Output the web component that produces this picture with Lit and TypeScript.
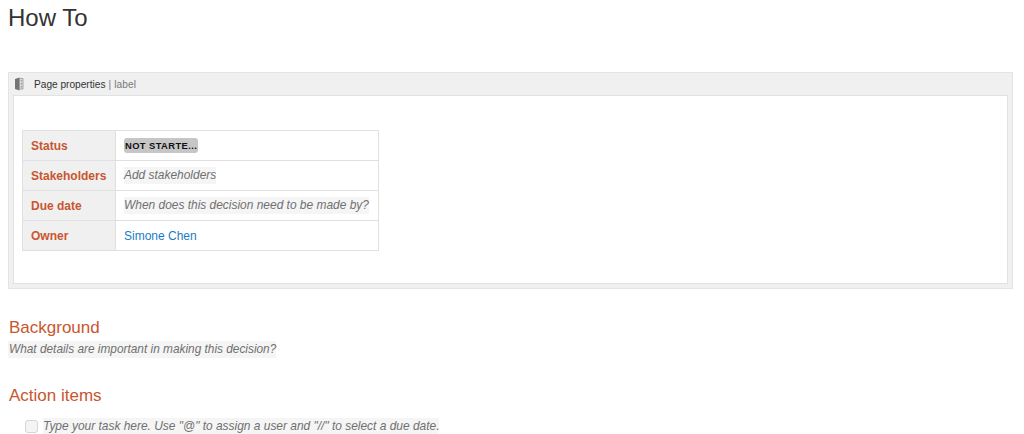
import { LitElement, html, css } from "lit";
import { customElement } from "lit/decorators.js";

@customElement("app-root")
export class AppRoot extends LitElement {
  static styles = css`
    :host { display: block; width: 1024px; height: 434px; overflow: hidden; background: #fff;
      font-family: "Liberation Sans", Arial, sans-serif; font-size: 12px; color: #333; }
    .page { padding: 0 11px 0 8px; }
    h1 { margin: 0; height: 72px; box-sizing: border-box; padding-top: 3px; font-size: 24px; line-height: 30px; font-weight: 400; color: #333; }
    .macro { height: 217px; box-sizing: border-box; background: #f0f0f0; border: 1px solid #e4e4e4; display: flex; flex-direction: column; padding: 0 4px 4px 4px; }
    .title { height: 22px; flex: none; display: flex; align-items: center; font-size: 10.15px; color: #333; }
    .title svg { margin-left: 1px; margin-right: 10px; }
    .title .label { color: #777; margin-left: 3px; letter-spacing: 0.1px; }
    .body { flex: 1; background: #fff; border: 1px solid #e2e2e2; padding: 34px 0 0 8px; }
    table { border-collapse: collapse; width: 357px; table-layout: fixed; }
    th, td { height: 30px; padding: 0 0 0 8px; border: 1px solid #e0e0e0; box-sizing: border-box; font-size: 12px; text-align: left; }
    th { width: 93px; background: #f0f0f0; color: #c8562e; font-weight: 700; }
    .ph { background: #f5f5f5; color: #707070; font-style: italic; display: inline-block; line-height: 17px; white-space: nowrap; }
    td .ph { font-size: 11.95px; }
    .lozenge { display: inline-block; background: #c6c6c6; color: #111; font-size: 9.4px; font-weight: 700; line-height: 15px; border-radius: 3px; padding: 0 1px; letter-spacing: 0.4px; vertical-align: 1px; }
    a { color: #1a7cc4; text-decoration: none; }
    h2 { margin: 0 0 0 1px; font-size: 17px; line-height: 20px; font-weight: 400; color: #c8562e; }
    .bg { margin-top: 29px; }
    .bg .ph { margin-top: 3px; font-size: 11.85px; display: block; width: fit-content; padding-left: 1px; }
    .act { margin-top: 28px; }
    .task { display: flex; align-items: center; gap: 5px; margin: 12px 0 0 17px; }
    .box { width: 11px; height: 11px; border: 1px solid #d6d6d6; border-radius: 3px; background: #f4f4f4; flex: none; }
    .task .ph { font-size: 11.94px; }
  `;

  render() {
    return html`<div class="page">
      <h1>How To</h1>
      <div class="macro">
        <div class="title">
          <svg width="10" height="14" viewBox="0 0 10 14">
            <path d="M1 2 L5.5 0.5 V13.5 L1 12 Z" fill="#747474"/>
            <path d="M5.5 1.5 H9 V12 H5.5 Z" fill="#dcdcdc" stroke="#8a8a8a" stroke-width="0.7"/>
            <path d="M7.3 3 V4.5 M7.3 6 V7.5 M7.3 9 V10.5" stroke="#888" stroke-width="0.9"/>
          </svg>
          <span>Page properties</span><span class="label">| label</span>
        </div>
        <div class="body">
          <table>
            <tr><th>Status</th><td><span class="lozenge">NOT STARTE...</span></td></tr>
            <tr><th>Stakeholders</th><td><span class="ph">Add stakeholders</span></td></tr>
            <tr><th>Due date</th><td><span class="ph">When does this decision need to be made by?</span></td></tr>
            <tr><th>Owner</th><td><a href="#">Simone Chen</a></td></tr>
          </table>
        </div>
      </div>
      <div class="bg">
        <h2>Background</h2>
        <span class="ph">What details are important in making this decision?</span>
      </div>
      <div class="act">
        <h2>Action items</h2>
        <div class="task"><span class="box"></span><span class="ph">Type your task here. Use "@" to assign a user and "//" to select a due date.</span></div>
      </div>
    </div>`;
  }
}
